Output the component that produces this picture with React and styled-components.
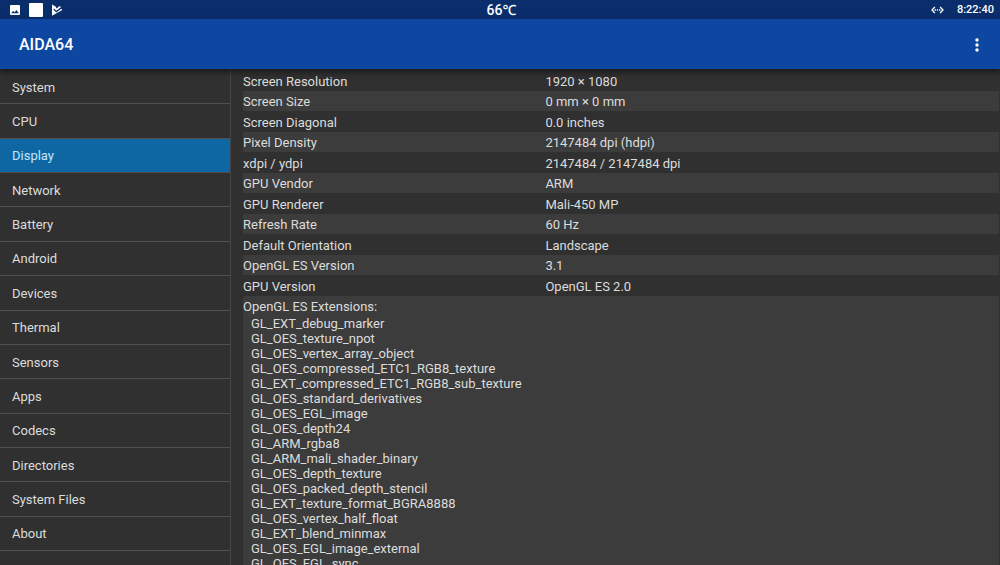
import React, { useState } from "react";
import styled, { createGlobalStyle } from "styled-components";

const sections = [
  "System",
  "CPU",
  "Display",
  "Network",
  "Battery",
  "Android",
  "Devices",
  "Thermal",
  "Sensors",
  "Apps",
  "Codecs",
  "Directories",
  "System Files",
  "About",
];

const details = [
  ["Screen Resolution", "1920 × 1080"],
  ["Screen Size", "0 mm × 0 mm"],
  ["Screen Diagonal", "0.0 inches"],
  ["Pixel Density", "2147484 dpi (hdpi)"],
  ["xdpi / ydpi", "2147484 / 2147484 dpi"],
  ["GPU Vendor", "ARM"],
  ["GPU Renderer", "Mali-450 MP"],
  ["Refresh Rate", "60 Hz"],
  ["Default Orientation", "Landscape"],
  ["OpenGL ES Version", "3.1"],
  ["GPU Version", "OpenGL ES 2.0"],
];

const extensions = [
  "GL_EXT_debug_marker",
  "GL_OES_texture_npot",
  "GL_OES_vertex_array_object",
  "GL_OES_compressed_ETC1_RGB8_texture",
  "GL_EXT_compressed_ETC1_RGB8_sub_texture",
  "GL_OES_standard_derivatives",
  "GL_OES_EGL_image",
  "GL_OES_depth24",
  "GL_ARM_rgba8",
  "GL_ARM_mali_shader_binary",
  "GL_OES_depth_texture",
  "GL_OES_packed_depth_stencil",
  "GL_EXT_texture_format_BGRA8888",
  "GL_OES_vertex_half_float",
  "GL_EXT_blend_minmax",
  "GL_OES_EGL_image_external",
  "GL_OES_EGL_sync",
];

const App = () => {
  const [active, setActive] = useState("Display");

  const openSection = (e, name) => {
    e.preventDefault();
    setActive(name);
  };

  return (
    <Screen>
      <GlobalStyle />
      <StatusBar>
        <StatusLeft>
          <svg width="12" height="12" viewBox="0 0 12 12">
            <path
              fill="#fff"
              fillRule="evenodd"
              d="M2 1h8a1 1 0 0 1 1 1v8a1 1 0 0 1-1 1H2a1 1 0 0 1-1-1V2a1 1 0 0 1 1-1zM2.200 9.300h7.600L7.400 6.100 5.500 8.400 4.200 6.800z"
            />
          </svg>
          <svg width="14" height="14" viewBox="0 0 14 14">
            <rect width="14" height="14" rx="1" fill="#fff" />
          </svg>
          <svg width="12" height="12" viewBox="0 0 12 12">
            <path fill="#fff" d="M1 .5L4.600 2.500 5.400 4.600 8.800 2 10 3.300 5.300 6.700 3 4.400 2.300 5.600 5.300 8.600 10.300 4.700 11.300 6 1 11.700z" />
          </svg>
        </StatusLeft>
        <Temperature>66℃</Temperature>
        <StatusRight>
          <svg width="13" height="8" viewBox="0 0 13 8" fill="none" stroke="#fff" strokeWidth="1.300">
            <path d="M3.900 1L1 4l2.900 3M9.100 1L12 4 9.100 7" />
            <path d="M3.600 4h1.300M5.850 4h1.300M8.100 4h1.300" />
          </svg>
          <Clock>8:22:40</Clock>
        </StatusRight>
      </StatusBar>
      <AppBar>
        <Title>AIDA64</Title>
        <MenuButton aria-label="More options">
          <svg width="4" height="14" viewBox="0 0 4 14" fill="#fff">
            <circle cx="2" cy="2" r="1.700" />
            <circle cx="2" cy="7" r="1.700" />
            <circle cx="2" cy="12" r="1.700" />
          </svg>
        </MenuButton>
      </AppBar>
      <Body>
        <Sidebar>
          {sections.map((name) => (
            <NavLink
              key={name}
              href="#"
              $active={name === active}
              aria-current={name === active ? "page" : undefined}
              onClick={(e) => openSection(e, name)}
            >
              {name}
            </NavLink>
          ))}
        </Sidebar>
        <Panel>
          <Table>
            <tbody>
              {details.map(([label, value]) => (
                <Row key={label}>
                  <Label scope="row">{label}</Label>
                  <Value>{value}</Value>
                </Row>
              ))}
            </tbody>
          </Table>
          <Extensions>
            <ExtensionsTitle>OpenGL ES Extensions:</ExtensionsTitle>
            <ExtensionList>
              {extensions.map((name) => (
                <li key={name}>{name}</li>
              ))}
            </ExtensionList>
          </Extensions>
        </Panel>
      </Body>
    </Screen>
  );
};

export default App;

const GlobalStyle = createGlobalStyle`
  * {
    box-sizing: border-box;
  }
  body {
    margin: 0;
    background: #303030;
    color: #dcdcdc;
    font-family: Roboto, "Noto Sans", "Noto Sans CJK SC", sans-serif;
    font-size: 13px;
  }
  svg {
    display: block;
  }
`;
const Screen = styled.div`
  height: 100vh;
  display: flex;
  flex-direction: column;
  overflow: hidden;
`;
const StatusBar = styled.div`
  display: grid;
  grid-template-columns: 1fr auto 1fr;
  align-items: center;
  flex-shrink: 0;
  height: 19px;
  padding: 0 6px 0 9px;
  background: #0a2d6b;
  color: #fff;
`;
const StatusLeft = styled.div`
  display: flex;
  align-items: center;
  gap: 8px;
`;
const Temperature = styled.span`
  font-size: 14px;
  line-height: 18px;
  font-weight: 500;
`;
const StatusRight = styled.div`
  display: flex;
  align-items: center;
  justify-content: flex-end;
  gap: 13px;
`;
const Clock = styled.time`
  font-size: 11px;
  font-weight: 500;
`;
const AppBar = styled.header`
  display: flex;
  align-items: center;
  justify-content: space-between;
  flex-shrink: 0;
  height: 50px;
  padding: 1px 13px 0 19px;
  background: #0e47a1;
  box-shadow: 0 3px 6px rgba(0, 0, 0, 0.5);
  color: #fff;
  z-index: 1;
`;
const Title = styled.h1`
  margin: 0;
  font-size: 16px;
  font-weight: 500;
`;
const MenuButton = styled.button`
  display: flex;
  justify-content: center;
  width: 20px;
  padding: 8px 0;
  border: 0;
  background: none;
  cursor: pointer;
`;
const Body = styled.div`
  display: flex;
  flex: 1;
  min-height: 0;
`;
const Sidebar = styled.nav`
  display: grid;
  grid-auto-rows: minmax(32px, 1fr);
  width: 23%;
  padding: 1px 0 14px;
`;
const NavLink = styled.a`
  display: flex;
  align-items: center;
  padding: 1px 12px 0;
  border-bottom: 1px solid #505050;
  background: ${(props) => (props.$active ? "#0e67a3" : "transparent")};
  color: ${(props) => (props.$active ? "#c4e6fa" : "#dcdcdc")};
  text-decoration: none;
`;
const Panel = styled.main`
  flex: 1;
  padding: 1px 1px 0 12px;
  border-left: 1px solid #454545;
  overflow: hidden;
`;
const Table = styled.table`
  width: 100%;
  table-layout: fixed;
  border-collapse: collapse;
`;
const Row = styled.tr`
  height: 21px;

  &:nth-child(even) {
    height: 20px;
    background: #3c3c3c;
  }
`;
const Label = styled.th`
  width: 40%;
  padding: 2px 0 0;
  font-weight: 400;
  line-height: 18px;
  text-align: left;
`;
const Value = styled.td`
  padding: 2px 0 0;
  line-height: 18px;
`;
const Extensions = styled.section`
  background: #3c3c3c;
`;
const ExtensionsTitle = styled.h2`
  margin: 0;
  padding-top: 2px;
  font-size: 13px;
  font-weight: 400;
  line-height: 18px;
`;
const ExtensionList = styled.ul`
  margin: 0;
  padding: 0 0 0 8px;
  list-style: none;
  line-height: 15px;
`;
